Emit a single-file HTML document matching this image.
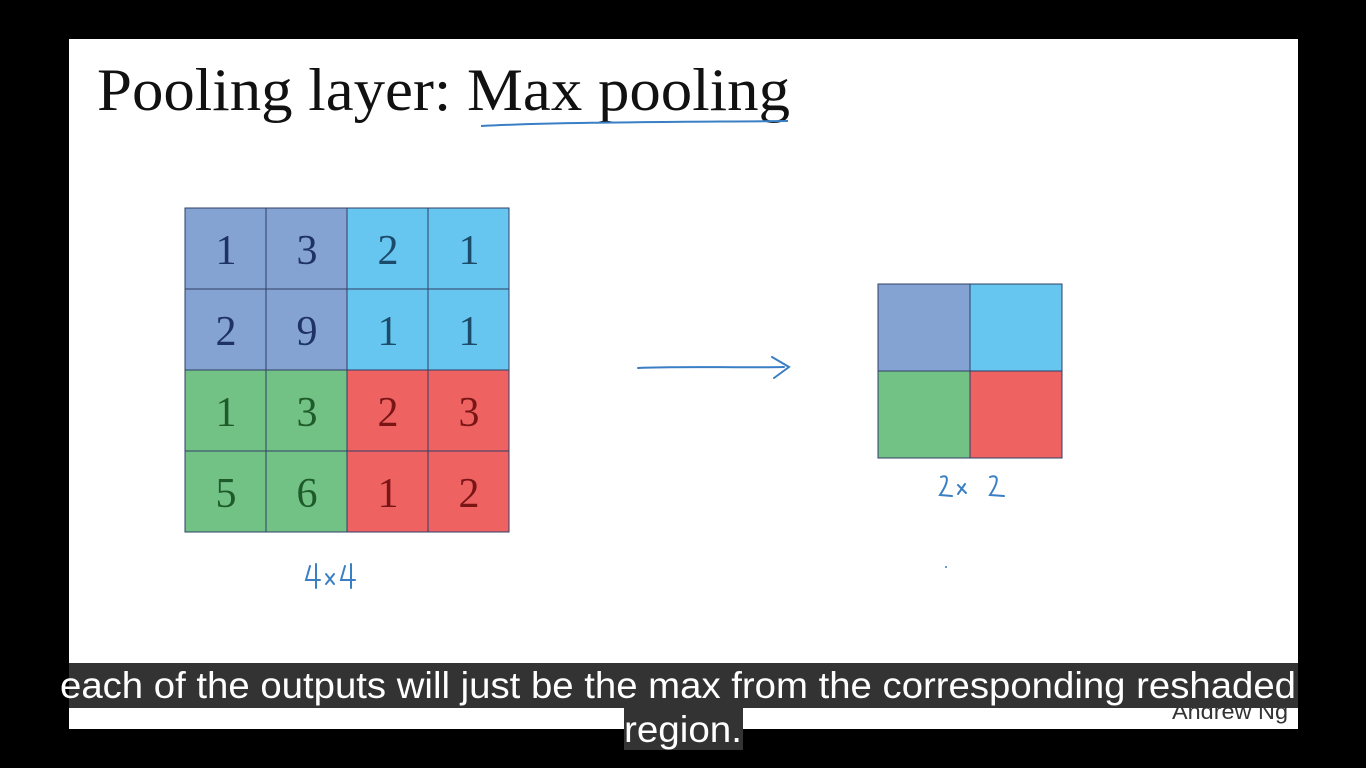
<!DOCTYPE html>
<html><head><meta charset="utf-8"><style>
html,body{margin:0;padding:0;background:#000;width:1366px;height:768px;overflow:hidden}
svg{display:block}
</style></head><body>
<svg width="1366" height="768" viewBox="0 0 1366 768" xmlns="http://www.w3.org/2000/svg">
<rect x="0" y="0" width="1366" height="768" fill="#000"/>
<rect x="69" y="39" width="1229" height="690" fill="#fff"/>
<text x="97" y="110" font-family="Liberation Serif, serif" font-size="60" fill="#111" textLength="693" lengthAdjust="spacingAndGlyphs">Pooling layer: Max pooling</text>
<path d="M481 126 C560 122 680 122 788 121" stroke="#3a7fc4" stroke-width="2" fill="none"/>
<g stroke="#2f3f66" stroke-width="1">
<rect x="185" y="208" width="162" height="162" fill="#84a3d3"/>
<rect x="347" y="208" width="162" height="162" fill="#66c6ef"/>
<rect x="185" y="370" width="162" height="162" fill="#72c286"/>
<rect x="347" y="370" width="162" height="162" fill="#ee6262"/>
<path d="M266 208V532M347 208V532M428 208V532M185 289H509M185 370H509M185 451H509" fill="none"/>
</g>
<g font-family="Liberation Serif, serif" font-size="42" text-anchor="middle">
<g fill="#1f3266"><text x="226" y="264">1</text><text x="307" y="264">3</text><text x="226" y="345">2</text><text x="307" y="345">9</text></g>
<g fill="#1c4a6a"><text x="388" y="264">2</text><text x="469" y="264">1</text><text x="388" y="345">1</text><text x="469" y="345">1</text></g>
<g fill="#1f5a2a"><text x="226" y="426">1</text><text x="307" y="426">3</text><text x="226" y="507">5</text><text x="307" y="507">6</text></g>
<g fill="#7a1515"><text x="388" y="426">2</text><text x="469" y="426">3</text><text x="388" y="507">1</text><text x="469" y="507">2</text></g>
</g>
<g fill="none" stroke="#3a7fc4" stroke-width="2" stroke-linecap="round">
<path d="M310 566L306 580H320M316 564V588"/>
<path d="M326 574L334 584M334 574L326 584"/>
<path d="M345 566L341 580H355M351 564V588"/>
<path d="M638 368C680 366 740 368 784 367M772 357L789 367L774 378"/>
<path d="M941 477C948 474 950 480 940 495L952 496M958 485L966 493M965 484L958 494M990 477C998 474 1000 480 990 495L1004 496"/>
</g>
<g stroke="#2f3f66" stroke-width="1">
<rect x="878" y="284" width="92" height="87" fill="#84a3d3"/>
<rect x="970" y="284" width="92" height="87" fill="#66c6ef"/>
<rect x="878" y="371" width="92" height="87" fill="#72c286"/>
<rect x="970" y="371" width="92" height="87" fill="#ee6262"/>
</g>
<circle cx="946" cy="567" r="1" fill="#3a7fc4"/>
<text x="1288" y="719" font-family="Liberation Sans, sans-serif" font-size="22" fill="#333" text-anchor="end" textLength="116" lengthAdjust="spacingAndGlyphs">Andrew Ng</text>
<rect x="69" y="663" width="1229" height="45" fill="#333"/>
<rect x="624" y="706" width="119" height="44" fill="#333"/>
<text x="678" y="698" font-family="Liberation Sans, sans-serif" font-size="37" fill="#fff" text-anchor="middle" textLength="1236" lengthAdjust="spacingAndGlyphs">each of the outputs will just be the max from the corresponding reshaded</text>
<text x="683" y="742" font-family="Liberation Sans, sans-serif" font-size="37" fill="#fff" text-anchor="middle" textLength="118" lengthAdjust="spacingAndGlyphs">region.</text>
</svg>
</body></html>
